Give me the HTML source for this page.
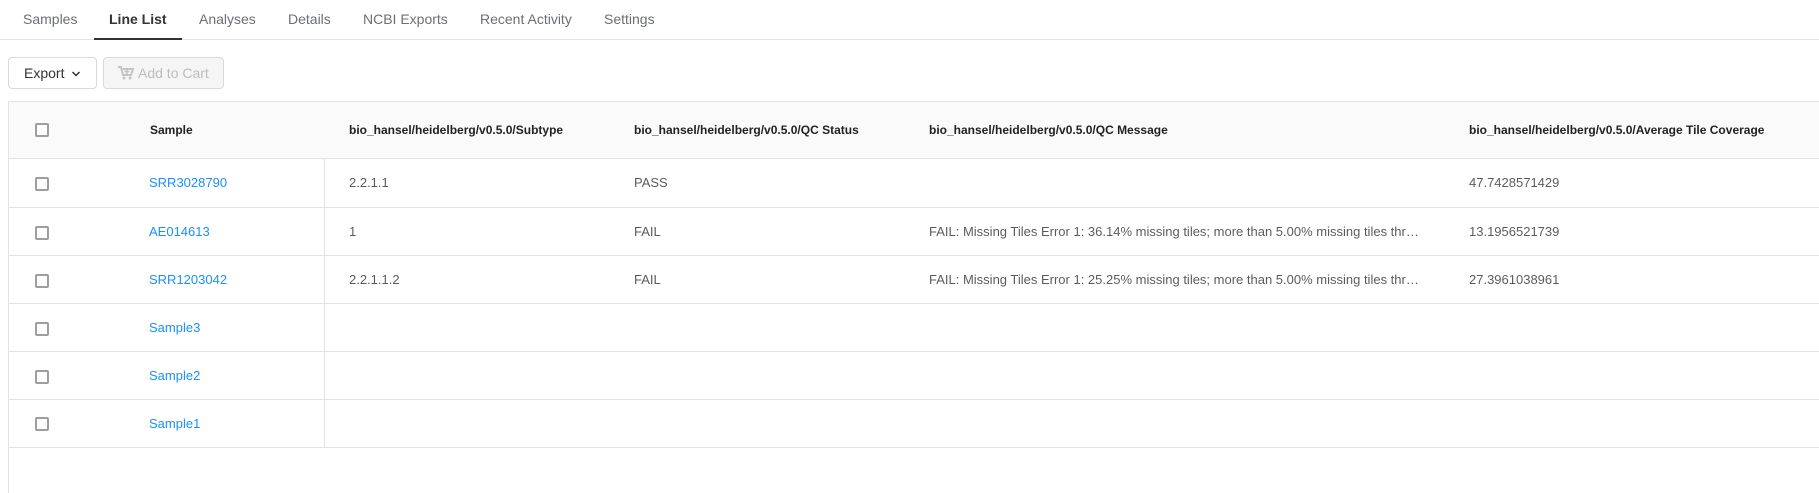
<!DOCTYPE html>
<html><head><meta charset="utf-8"><style>
*{box-sizing:border-box;margin:0;padding:0}
body{width:1819px;height:493px;background:#fff;font-family:"Liberation Sans",sans-serif;position:relative;overflow:hidden;color:rgba(0,0,0,.65)}
.tab{position:absolute;top:10px;font-size:14px;color:#6b6f73;line-height:18px}
.tab.act{color:#333;font-weight:bold}
.abs{position:absolute}
.cb{position:absolute;left:35px;width:14px;height:14px;border:2px solid #9e9e9e;border-radius:2px;background:#fff}
.h{position:absolute;font-size:12px;font-weight:bold;color:#222;top:123px}
.t{position:absolute;font-size:13px;line-height:16px}
.lk{color:#1890ff}
.hl{position:absolute;left:8px;right:0;height:1px;background:#e3e3e3}
</style></head><body>
<div class="tab" style="left:23px">Samples</div>
<div class="tab act" style="left:109px">Line List</div>
<div class="tab" style="left:199px">Analyses</div>
<div class="tab" style="left:288px">Details</div>
<div class="tab" style="left:363px">NCBI Exports</div>
<div class="tab" style="left:480px">Recent Activity</div>
<div class="tab" style="left:604px">Settings</div>
<div class="abs" style="left:0;right:0;top:39px;height:1px;background:#e3e3e3"></div>
<div class="abs" style="left:94px;width:88px;top:38px;height:2px;background:#333"></div>

<div class="abs" style="left:8px;top:57px;width:89px;height:32px;border:1px solid #d9d9d9;border-radius:4px;font-size:14px;color:#333;line-height:30px;padding-left:15px">Export <svg width="10" height="8" viewBox="0 0 10 8" style="margin-left:3px"><path d="M1.5 2 L5 5.5 L8.5 2" fill="none" stroke="#333" stroke-width="1.5"/></svg></div>
<div class="abs" style="left:103px;top:57px;width:121px;height:32px;border:1px solid #d9d9d9;border-radius:4px;background:#f5f5f5;font-size:14px;color:#bdbdbd;line-height:30px;padding-left:14px"><svg width="16" height="14" viewBox="0 0 16 14" style="vertical-align:-2px;margin-right:4px"><path d="M0 1h3l2 8h8l2-6H5" fill="none" stroke="#c4c4c4" stroke-width="2"/><circle cx="6" cy="12" r="1.5" fill="#c4c4c4"/><circle cx="12" cy="12" r="1.5" fill="#c4c4c4"/><path d="M9 3v5M6.5 5.5h5" stroke="#c4c4c4" stroke-width="1.6"/></svg>Add to Cart</div>

<div class="abs" style="left:8px;right:0;top:101px;height:57px;background:#fafafa;border-top:1px solid #e3e3e3"></div>
<div class="abs" style="left:8px;top:101px;width:1px;height:392px;background:#e3e3e3"></div>
<div class="hl" style="top:158px"></div>
<div class="hl" style="top:207px"></div>
<div class="hl" style="top:255px"></div>
<div class="hl" style="top:303px"></div>
<div class="hl" style="top:351px"></div>
<div class="hl" style="top:399px"></div>
<div class="hl" style="top:447px"></div>
<div class="abs" style="left:324px;top:159px;width:1px;height:288px;background:#e3e3e3"></div>

<div class="cb" style="top:123px"></div>
<div class="h" style="left:150px">Sample</div>
<div class="h" style="left:349px">bio_hansel/heidelberg/v0.5.0/Subtype</div>
<div class="h" style="left:634px">bio_hansel/heidelberg/v0.5.0/QC Status</div>
<div class="h" style="left:929px">bio_hansel/heidelberg/v0.5.0/QC Message</div>
<div class="h" style="left:1469px">bio_hansel/heidelberg/v0.5.0/Average Tile Coverage</div>

<div class="cb" style="top:177px"></div>
<div class="t lk" style="left:149px;top:175px">SRR3028790</div>
<div class="t" style="left:349px;top:175px">2.2.1.1</div>
<div class="t" style="left:634px;top:175px">PASS</div>
<div class="t" style="left:1469px;top:175px">47.7428571429</div>

<div class="cb" style="top:226px"></div>
<div class="t lk" style="left:149px;top:224px">AE014613</div>
<div class="t" style="left:349px;top:224px">1</div>
<div class="t" style="left:634px;top:224px">FAIL</div>
<div class="t" style="left:929px;top:224px">FAIL: Missing Tiles Error 1: 36.14% missing tiles; more than 5.00% missing tiles thr…</div>
<div class="t" style="left:1469px;top:224px">13.1956521739</div>

<div class="cb" style="top:274px"></div>
<div class="t lk" style="left:149px;top:272px">SRR1203042</div>
<div class="t" style="left:349px;top:272px">2.2.1.1.2</div>
<div class="t" style="left:634px;top:272px">FAIL</div>
<div class="t" style="left:929px;top:272px">FAIL: Missing Tiles Error 1: 25.25% missing tiles; more than 5.00% missing tiles thr…</div>
<div class="t" style="left:1469px;top:272px">27.3961038961</div>

<div class="cb" style="top:322px"></div>
<div class="t lk" style="left:149px;top:320px">Sample3</div>
<div class="cb" style="top:370px"></div>
<div class="t lk" style="left:149px;top:368px">Sample2</div>
<div class="cb" style="top:417px"></div>
<div class="t lk" style="left:149px;top:416px">Sample1</div>
</body></html>
